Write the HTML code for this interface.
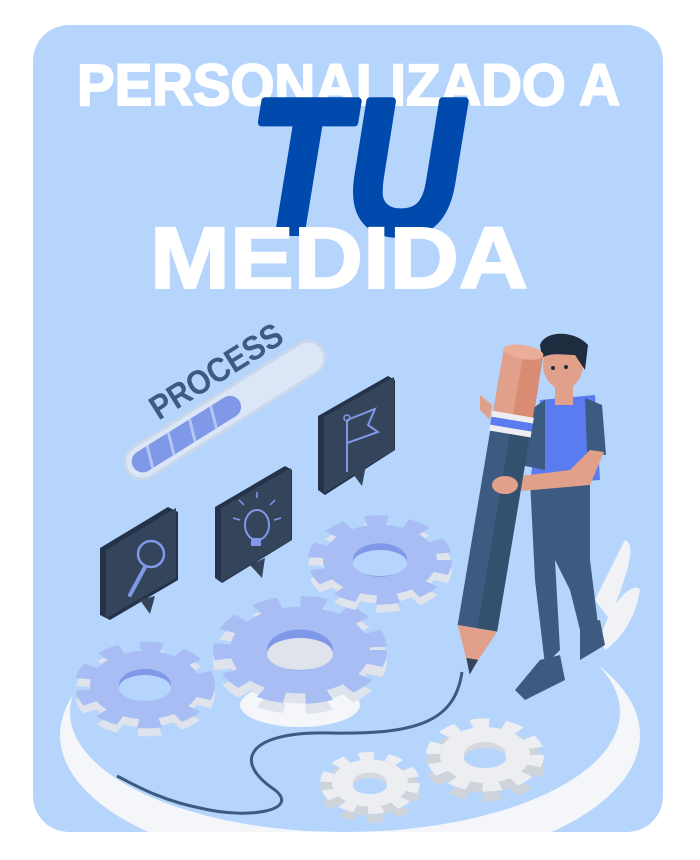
<!DOCTYPE html>
<html><head><meta charset="utf-8"><style>
html,body{margin:0;padding:0;background:#fff;width:700px;height:860px;overflow:hidden}
svg{display:block}
</style></head><body>
<svg width="700" height="860" viewBox="0 0 700 860" xmlns="http://www.w3.org/2000/svg">
<defs>
<clipPath id="card"><rect x="33" y="25" width="630" height="807" rx="36"/></clipPath>
</defs>
<rect x="33" y="25" width="630" height="807" rx="36" fill="#b5d5fd"/>
<g clip-path="url(#card)">
<ellipse cx="350" cy="735" rx="290" ry="135" fill="#f4f6f9"/>
<ellipse cx="345" cy="712" rx="275" ry="120" fill="#b5d5fd"/>
<ellipse cx="300" cy="705" rx="60" ry="22" fill="#f4f6f9"/>
<path d="M462 672 C455 720 420 735 330 733 C250 731 230 760 275 790 C300 810 250 820 200 808 C160 800 135 785 117 776" fill="none" stroke="#3d5a80" stroke-width="3"/>
</g>
<g transform="translate(145,693) scale(1,0.62)"><circle r="55" fill="#dfe3ec"/><circle r="62" fill="none" stroke="#dfe3ec" stroke-width="16" stroke-dasharray="22 19"/></g>
<g transform="translate(145,685) scale(1,0.62)"><circle r="55" fill="#a9bdf5"/><circle r="62" fill="none" stroke="#a9bdf5" stroke-width="16" stroke-dasharray="22 19"/><circle r="26" fill="#7f98e8"/></g>
<ellipse cx="145" cy="688" rx="26" ry="13" fill="#b5d5fd"/>
<g transform="translate(300,660) scale(1,0.62)"><circle r="70" fill="#dfe3ec"/><circle r="78" fill="none" stroke="#dfe3ec" stroke-width="18" stroke-dasharray="25 21"/></g>
<g transform="translate(300,650) scale(1,0.62)"><circle r="70" fill="#a9bdf5"/><circle r="78" fill="none" stroke="#a9bdf5" stroke-width="18" stroke-dasharray="25 21"/><circle r="33" fill="#7f98e8"/></g>
<ellipse cx="300" cy="654" rx="33" ry="16" fill="#dfe3ec"/>
<g transform="translate(380,568) scale(1,0.62)"><circle r="57" fill="#dfe3ec"/><circle r="64" fill="none" stroke="#dfe3ec" stroke-width="16" stroke-dasharray="22 19"/></g>
<g transform="translate(380,560) scale(1,0.62)"><circle r="57" fill="#a9bdf5"/><circle r="64" fill="none" stroke="#a9bdf5" stroke-width="16" stroke-dasharray="22 19"/><circle r="27" fill="#7f98e8"/></g>
<ellipse cx="380" cy="563" rx="27" ry="13" fill="#b5d5fd"/>
<g transform="translate(485,765) scale(1,0.62)"><circle r="45" fill="#cfd3da"/><circle r="52" fill="none" stroke="#cfd3da" stroke-width="14" stroke-dasharray="18 15"/></g>
<g transform="translate(485,755) scale(1,0.62)"><circle r="45" fill="#eceef1"/><circle r="52" fill="none" stroke="#eceef1" stroke-width="14" stroke-dasharray="18 15"/><circle r="21" fill="#d5d8de"/></g>
<ellipse cx="485" cy="758" rx="21" ry="10" fill="#b5d5fd"/>
<g transform="translate(370,792) scale(1,0.62)"><circle r="38" fill="#cfd3da"/><circle r="44" fill="none" stroke="#cfd3da" stroke-width="12" stroke-dasharray="15 13"/></g>
<g transform="translate(370,783) scale(1,0.62)"><circle r="38" fill="#eceef1"/><circle r="44" fill="none" stroke="#eceef1" stroke-width="12" stroke-dasharray="15 13"/><circle r="17" fill="#d5d8de"/></g>
<ellipse cx="370" cy="786" rx="17" ry="8" fill="#b5d5fd"/>
<path d="M595 600 C615 560 630 530 625 540 C640 545 620 590 610 620Z" fill="#f0f2f5"/>
<path d="M600 640 C610 600 635 580 640 590 C635 620 620 640 605 650Z" fill="#f0f2f5"/>
<polygon points="100,548 168,507 178,512 178,580 110,620 100,615" fill="#25334a"/>
<polygon points="106,550 176,508 176,578 106,618" fill="#34445a"/>
<polygon points="140,600 150,614 155,596" fill="#34445a"/>
<circle cx="151" cy="554" r="13" fill="none" stroke="#7f98e8" stroke-width="2.5"/>
<line x1="145" y1="567" x2="130" y2="595" stroke="#7f98e8" stroke-width="4" stroke-linecap="round"/>
<polygon points="215,507 285,466 292,470 292,540 222,583 215,578" fill="#25334a"/>
<polygon points="221,508 291,468 291,540 221,582" fill="#34445a"/>
<polygon points="250,565 262,578 265,558" fill="#34445a"/>
<ellipse cx="257" cy="525" rx="12" ry="15" fill="none" stroke="#7f98e8" stroke-width="2"/>
<rect x="251" y="538" width="10" height="8" fill="#7f98e8"/>
<g stroke="#7f98e8" stroke-width="1.5"><line x1="240" y1="520" x2="233" y2="518"/><line x1="244" y1="505" x2="239" y2="500"/><line x1="257" y1="498" x2="257" y2="492"/><line x1="270" y1="505" x2="275" y2="500"/><line x1="274" y1="520" x2="281" y2="518"/></g>
<polygon points="318,416 388,376 395,380 395,450 325,495 318,490" fill="#25334a"/>
<polygon points="324,417 394,377 394,450 324,493" fill="#34445a"/>
<polygon points="350,470 362,486 366,465" fill="#34445a"/>
<line x1="347" y1="420" x2="347" y2="472" stroke="#7f98e8" stroke-width="2"/>
<path d="M347 420 L375 409 L368 425 L378 432 L347 443" fill="none" stroke="#7f98e8" stroke-width="2"/>
<circle cx="347" cy="418" r="3" fill="none" stroke="#7f98e8" stroke-width="1.5"/>
<g transform="translate(225,410) rotate(-32)">
<rect x="-115" y="-17" width="230" height="34" rx="17" fill="#dbe6f6" stroke="#c9d7ec" stroke-width="3"/>
<rect x="-108" y="-11" width="125" height="22" rx="11" fill="#7f98e8"/>
<g stroke="#b5c6f3" stroke-width="3"><line x1="-85" y1="-11" x2="-92" y2="11"/><line x1="-60" y1="-11" x2="-67" y2="11"/><line x1="-35" y1="-11" x2="-42" y2="11"/><line x1="-10" y1="-11" x2="-17" y2="11"/></g>
<text x="-62" y="-26" font-family="Liberation Sans, sans-serif" font-weight="bold" font-size="34" fill="#3d5a80" textLength="150" lengthAdjust="spacingAndGlyphs">PROCESS</text>
</g>
<path d="M530 480 L590 480 L590 560 L600 640 L585 650 L570 590 L555 560 L560 650 L545 665 L535 580 Z" fill="#3d5a80"/>
<path d="M580 625 L600 620 L605 645 L580 660 Z" fill="#3d5a80"/>
<path d="M540 660 L560 655 L565 680 L525 700 L515 690 Z" fill="#3d5a80"/>
<path d="M540 400 L595 395 L600 480 L530 485 Z" fill="#5b7cf0"/>
<path d="M530 410 L545 400 L545 470 L520 465 Z" fill="#3d5a80"/>
<path d="M585 398 L602 405 L606 455 L587 452 Z" fill="#3d5a80"/>
<path d="M590 450 L604 452 L590 485 L510 492 L505 478 L570 470 Z" fill="#e1a08a"/>
<rect x="555" y="385" width="18" height="20" fill="#e1a08a"/>
<ellipse cx="563" cy="365" rx="20" ry="24" fill="#e1a08a"/>
<path d="M540 345 C545 330 575 330 588 345 L585 370 L575 355 C565 355 550 352 542 358 Z" fill="#1f2b3e"/>
<circle cx="553" cy="368" r="2" fill="#1f2b3e"/><circle cx="566" cy="367" r="2" fill="#1f2b3e"/>
<g transform="translate(498,505) rotate(9.5)">
<rect x="-20" y="-125" width="40" height="250" fill="#3d5a80"/>
<rect x="0" y="-125" width="20" height="250" fill="#34506f"/>
<rect x="-20" y="-155" width="40" height="65" fill="#d98c73"/>
<rect x="-20" y="-155" width="20" height="65" fill="#e1a08a"/>
<ellipse cx="0" cy="-155" rx="20" ry="7" fill="#e9ad98"/>
<rect x="-21" y="-92" width="42" height="6" fill="#eceef1"/>
<rect x="-21" y="-86" width="42" height="8" fill="#5b7cf0"/>
<rect x="-21" y="-78" width="42" height="6" fill="#eceef1"/>
<polygon points="-20,125 20,125 0,170" fill="#e1a08a"/>
<polygon points="-6,156 6,156 0,172" fill="#34445a"/>
</g>
<ellipse cx="505" cy="485" rx="13" ry="9" fill="#e1a08a"/>
<path d="M480 395 L492 405 L490 420 L480 410 Z" fill="#e1a08a"/>
<text x="77" y="105" font-family="Liberation Sans, sans-serif" font-weight="bold" font-size="58" fill="#fff" textLength="543" lengthAdjust="spacingAndGlyphs" stroke="#fff" stroke-width="2">PERSONALIZADO A</text>
<text x="250" y="232" font-family="Liberation Sans, sans-serif" font-weight="bold" font-style="italic" font-size="190" fill="#004aad" stroke="#004aad" stroke-width="8" stroke-linejoin="round" textLength="212" lengthAdjust="spacingAndGlyphs">TU</text>
<text x="150" y="288" font-family="Liberation Sans, sans-serif" font-weight="bold" font-size="87" fill="#fff" textLength="378" lengthAdjust="spacingAndGlyphs" stroke="#fff" stroke-width="2">MEDIDA</text>
</svg>
</body></html>
